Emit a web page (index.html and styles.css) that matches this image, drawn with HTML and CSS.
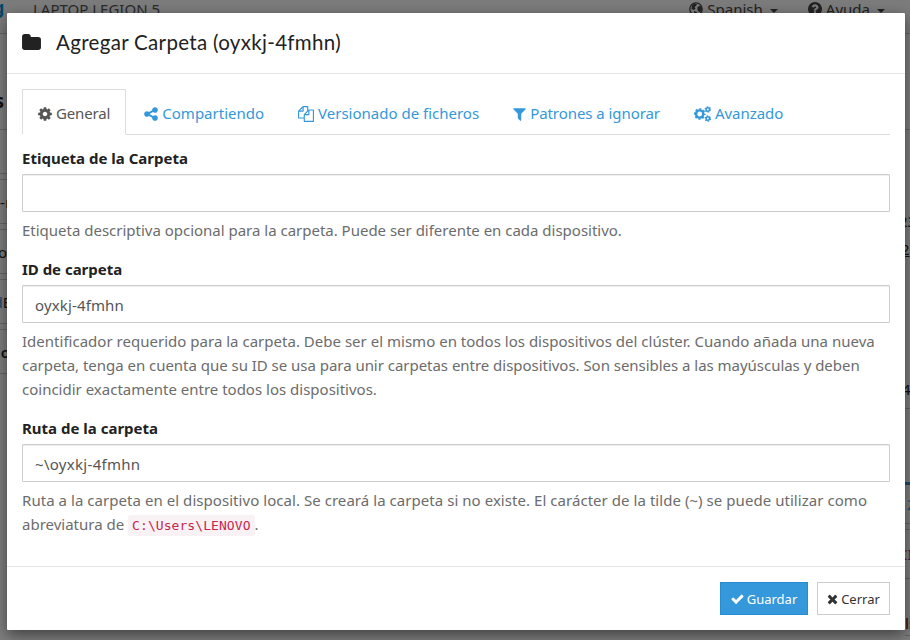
FILE: index.html
```html
<!DOCTYPE html>
<html lang="es">
<head>
<meta charset="utf-8">
<title>Agregar Carpeta</title>
<link rel="stylesheet" href="styles.css">
</head>
<body>
<svg class="defs" aria-hidden="true">
  <symbol id="cog" viewBox="128 0 1536 1792"><path d="M1152 896q0-106-75-181t-181-75-181 75-75 181 75 181 181 75 181-75 75-181zm512-109v222q0 12-8 23t-20 13l-185 28q-19 54-39 91 35 50 107 138 10 12 10 25t-9 23q-27 37-99 108t-94 71q-12 0-26-9l-138-108q-44 23-91 38-16 136-29 186-7 28-36 28h-222q-14 0-24.500-8.500t-11.500-21.500l-28-184q-49-16-90-37l-141 107q-10 9-25 9-14 0-25-11-126-114-165-168-7-10-7-23 0-12 8-23 15-21 51-66.500t54-70.500q-27-50-41-99l-183-27q-13-2-21-12.500t-8-23.500v-222q0-12 8-23t19-13l186-28q14-46 39-92-40-57-107-138-10-12-10-24 0-10 9-23 26-36 98.500-107.500t94.500-71.500q13 0 26 10l138 107q44-23 91-38 16-136 29-186 7-28 36-28h222q14 0 24.500 8.500t11.500 21.500l28 184q49 16 90 37l142-107q9-9 24-9 13 0 25 10 129 119 165 170 7 8 7 22 0 12-8 23-15 21-51 66.500t-54 70.500q26 50 41 98l183 28q13 2 21 12.500t8 23.500z"/></symbol>
</svg>

<div class="page">
  <header class="navbar">
    <span class="brand">g</span>
    <span class="device">LAPTOP LEGION 5</span>
    <span class="nav-item">
      <svg class="nav-icon" viewBox="0 0 14 14"><circle cx="7" cy="7" r="6.200" fill="none" stroke="currentColor" stroke-width="1.300"/><path d="M3 3l3-1.500 2 1-1 1.500-1.500 1 1 1.500-1.500 1.500-2.500-1zM8.500 5l3-1.500 1.500 3-1 3-2 .5-1.500-2zM5 9l3 1-1 3-2-1z"/></svg>
      <span>Spanish</span><i class="caret"></i></span>
    <span class="nav-item help-item">
      <svg class="nav-icon" viewBox="128 128 1536 1536"><path d="M1024 1376v-192q0-14-9-23t-23-9h-192q-14 0-23 9t-9 23v192q0 14 9 23t23 9h192q14 0 23-9t9-23zm256-672q0-88-55.500-163t-138.500-116-170-41q-243 0-371 213-15 24 8 42l132 100q7 6 19 6 16 0 25-12 53-68 86-92 34-24 86-24 48 0 85.500 26t37.500 59q0 38-20 61t-68 45q-63 28-115.500 86.500t-52.500 125.500v36q0 14 9 23t23 9h192q14 0 23-9t9-23q0-19 21.500-49.500t54.500-49.500q32-18 49-28.500t46-35 44.500-48 28-60.500 12.500-81zm384 192q0 209-103 385.500t-279.500 279.500-385.500 103-385.500-103-279.500-279.500-103-385.500 103-385.500 279.500-279.500 385.500-103 385.500 103 279.500 279.500 103 385.500z"/></svg>
      <span>Ayuda</span><i class="caret"></i></span>
  </header>
  <div class="behind">
    <div class="side left">
      <div class="row heading"><b>s</b></div>
      <div class="row spacer"></div>
      <div class="row panel cut-r"><span>-r</span></div>
      <div class="row panel"><span>o</span></div>
      <div class="row panel cut-e"><span><em>d</em>E</span></div>
      <div class="row panel cut-o"><b>do</b></div>
    </div>
    <div class="side right">
      <div class="row top"></div>
      <div class="row r1"><span>23</span></div>
      <div class="row r2"><u>2</u></div>
      <div class="row r3"><span>4</span></div>
      <div class="row r4"></div>
      <div class="row r5"><em>2</em></div>
      <div class="row r6"><strong>CI</strong></div>
      <div class="row r7"><span>li</span></div>
    </div>
  </div>
</div>
<div class="backdrop"></div>

<div class="modal">
  <div class="modal-header">
    <svg class="folder" viewBox="64 128 1664 1408"><path d="M1728 608v704q0 92-66 158t-158 66h-1216q-92 0-158-66t-66-158v-960q0-92 66-158t158-66h320q92 0 158 66t66 158v32h672q92 0 158 66t66 158z"/></svg>
    <h4>Agregar Carpeta (oyxkj-4fmhn)</h4>
  </div>
  <div class="modal-body">
    <nav class="tabs">
      <a class="tab active"><svg class="i-cog"><use href="#cog"/></svg><span class="t1">General</span></a>
      <a class="tab"><svg class="i-cog" viewBox="128 0 1536 1792"><path d="M1344 1024q133 0 226.500 93.500t93.500 226.500-93.500 226.500-226.500 93.500-226.500-93.500-93.500-226.500q0-12 2-34l-360-180q-92 86-218 86-133 0-226.500-93.500t-93.500-226.500 93.500-226.500 226.500-93.500q126 0 218 86l360-180q-2-22-2-34 0-133 93.500-226.500t226.500-93.500 226.500 93.500 93.500 226.500-93.500 226.500-226.500 93.500q-126 0-218-86l-360 180q2 22 2 34t-2 34l360 180q92-86 218-86z"/></svg><span class="t2">Compartiendo</span></a>
      <a class="tab"><svg class="i-files" viewBox="0 0 1792 1792"><path d="M1696 384q40 0 68 28t28 68v1216q0 40-28 68t-68 28h-960q-40 0-68-28t-28-68v-288h-544q-40 0-68-28t-28-68v-672q0-40 20-88t48-76l408-408q28-28 76-48t88-20h416q40 0 68 28t28 68v328q68-40 128-40h416zm-544 213l-299 299h299v-299zm-640-384l-299 299h299v-299zm196 647l316-316v-416h-384v416q0 40-28 68t-68 28h-416v640h512v-256q0-40 20-88t48-76zm956 804v-1152h-384v416q0 40-28 68t-68 28h-416v640h896z"/></svg><span class="t3">Versionado de ficheros</span></a>
      <a class="tab"><svg class="i-filter" viewBox="192 0 1408 1792"><path d="M1595 295q17 41-14 70l-493 493v742q0 42-39 59-13 5-25 5-27 0-45-19l-256-256q-19-19-19-45v-486l-493-493q-31-29-14-70 17-39 59-39h1280q42 0 59 39z"/></svg><span class="t4">Patrones a ignorar</span></a>
      <a class="tab"><svg class="i-cogs" viewBox="0 0 17 16"><g fill="none" stroke="currentColor"><circle cx="5.700" cy="8" r="3.600" stroke-width="2.400"/><circle cx="5.700" cy="8" r="5" stroke-width="1.700" stroke-dasharray="2.100 1.827" stroke-dashoffset="1.050"/><circle cx="13.800" cy="3.400" r="1.750" stroke-width="1.500"/><circle cx="13.800" cy="3.400" r="2.700" stroke-width="1.100" stroke-dasharray="1.500 1.327"/><circle cx="13.800" cy="12.600" r="1.750" stroke-width="1.500"/><circle cx="13.800" cy="12.600" r="2.700" stroke-width="1.100" stroke-dasharray="1.500 1.327"/></g></svg><span class="t5">Avanzado</span></a>
    </nav>

    <div class="group">
      <label class="l1">Etiqueta de la Carpeta</label>
      <div class="input"></div>
      <p><span class="p1">Etiqueta descriptiva opcional para la carpeta. Puede ser diferente en cada dispositivo.</span></p>
    </div>
    <div class="group">
      <label class="l2">ID de carpeta</label>
      <div class="input"><span>oyxkj-4fmhn</span></div>
      <p><span class="p2">Identificador requerido para la carpeta. Debe ser el mismo en todos los dispositivos del clúster. Cuando añada una nueva</span><br><span class="p3">carpeta, tenga en cuenta que su ID se usa para unir carpetas entre dispositivos. Son sensibles a las mayúsculas y deben</span><br><span class="p4">coincidir exactamente entre todos los dispositivos.</span></p>
    </div>
    <div class="group">
      <label class="l3">Ruta de la carpeta</label>
      <div class="input"><span class="path">~\oyxkj-4fmhn</span></div>
      <p><span class="p5">Ruta a la carpeta en el dispositivo local. Se creará la carpeta si no existe. El carácter de la tilde (~) se puede utilizar como</span><br><span class="p6">abreviatura de</span> <code>C:\Users\LENOVO</code>.</p>
    </div>
  </div>
  <div class="modal-footer">
    <button class="btn primary"><svg viewBox="100 0 1600 1792"><path d="M1671 566q0 40-28 68l-724 724-136 136q-28 28-68 28t-68-28l-136-136-362-362q-28-28-28-68t28-68l136-136q28-28 68-28t68 28l294 295 656-657q28-28 68-28t68 28l136 136q28 28 28 68z"/></svg><span>Guardar</span></button>
    <button class="btn"><svg class="times" viewBox="280 0 1232 1792"><path d="M1490 1322q0 40-28 68l-136 136q-28 28-68 28t-68-28l-294-294-294 294q-28 28-68 28t-68-28l-136-136q-28-28-28-68t28-68l294-294-294-294q-28-28-28-68t28-68l136-136q28-28 68-28t68 28l294 294 294-294q28-28 68-28t68 28l136 136q28 28 28 68t-28 68l-294 294 294 294q28 28 28 68z"/></svg><span>Cerrar</span></button>
  </div>
</div>
</body>
</html>
```
FILE: styles.css
```css
* { box-sizing: border-box; }
body { margin: 0; width: 910px; height: 640px; overflow: hidden; background: #fff;
  font: 15px/24px "Noto Sans", "Open Sans", sans-serif; color: #222; }
svg { fill: currentColor; flex: none; }
.defs { position: absolute; width: 0; height: 0; }

.page { position: absolute; inset: 0; display: flex; flex-direction: column; overflow: hidden; }
.navbar { height: 34px; display: flex; align-items: flex-start; background: #f8f8f8;
  border-bottom: 1px solid #ccc; color: #555; line-height: 18px; padding-right: 25px; }
.brand { width: 33px; margin-left: -7px; margin-right: 7px; font-size: 18px; font-weight: 700; color: #0891d1; line-height: 14px; }
.device { flex: 1; letter-spacing: 0; }
.nav-item { display: flex; align-items: center; height: 18px; gap: 4px; color: #444; }
.help-item { margin-left: 30px; }
.nav-icon { width: 14px; height: 14px; }
.caret { border: 4px solid transparent; border-top-color: currentColor; border-bottom: 0; margin: 3px 0 0 3px; }
.behind { flex: 1; display: flex; justify-content: space-between; }
.side { width: 7px; overflow: hidden; white-space: nowrap; }
.right { width: 5px; }
.row { display: flex; align-items: center; border-bottom: 1px solid #ccc; }
.left .row { justify-content: flex-end; }
.left .cut-r { justify-content: flex-start; }
.cut-r span { letter-spacing: .5px; }
.cut-e span { margin-right: -4px; }
.left .cut-o b { margin-right: -3px; font-weight: 600; }
.row em { color: #3498db; font-style: normal; }
.heading { height: 96px; padding: 38px 3px 0 0; font-size: 19px; }
.spacer { height: 44px; }
.panel { height: 45px; margin-top: 5px; border-top: 1px solid #ccc; }
.top { height: 96px; }
.r1 { height: 106px; border: 0; padding-top: 76px; }
.r1 span { margin-left: -6px; }
.r2 { height: 26px; border: 0; }
.r2 u { margin-left: -4px; }
.r3 { height: 147px; padding-top: 107px; }
.r3 span { margin-left: -3px; }
.r4 { height: 76px; border-bottom: 3px solid #3498db; }
.r5 { height: 39px; padding-left: 2px; }
.r6 { height: 50px; margin-top: 5px; border-top: 1px solid #ccc; }
.r6 strong { color: #a32b7d; font-weight: 400; margin-left: -7px; }
.r7 { height: 57px; padding-top: 32px; }
.backdrop { position: absolute; inset: 0; background: rgba(0,0,0,.5); }

.modal { position: absolute; left: 7px; top: 13px; width: 898px; height: 617px;
  display: flex; flex-direction: column; background: #fff; border-radius: 1px; box-shadow: 0 5px 15px rgba(0,0,0,.5); }
.modal-header { height: 61px; border-bottom: 1px solid #e5e5e5; padding: 0 15px; display: flex; align-items: center; }
.folder { width: 19px; height: 16px; margin: -2px 15px 0 0; }
h4 { margin: -3px 0 0; font: 400 20.500px/24px Lato, sans-serif; letter-spacing: .32px; white-space: nowrap; }
.modal-body { flex: 1; padding: 15px; }
.tabs { display: flex; height: 46px; border-bottom: 1px solid #ddd; margin-bottom: 11px; }
.tab { display: flex; align-items: center; gap: 4px; height: 46px; padding: 3px 15px 0; margin-right: 2px;
  border: 1px solid transparent; color: #3498db; white-space: nowrap; }
.tab span { margin-top: -2px; }
.t1 { letter-spacing: -.14px; }
.t4 { letter-spacing: -.06px; }
.t5 { letter-spacing: -.05px; }
.tab.active { background: #fff; border-color: #ddd #ddd #fff; border-radius: 1px 1px 0 0; color: #555; }
.i-cog { width: 14px; height: 16px; }
.i-files { width: 16px; height: 16px; }
.i-filter { width: 13px; height: 16px; }
.i-cogs { width: 17px; height: 16px; }
.group { margin-bottom: 15px; }
label { display: block; width: max-content; font-weight: 700; height: 24px; margin-bottom: 4px; font-size: 15px; }
.l2 { letter-spacing: -.02px; }
.input { height: 38px; border: 1px solid #ccc; border-radius: 1px; padding: 7px 12px; color: #555;
  box-shadow: inset 0 1px 1px rgba(0,0,0,.075); line-height: 24px; }
.input span { letter-spacing: .14px; }
.input .path { letter-spacing: .3px; }
p { margin: 6px 0 0; color: #6c6c6c; white-space: nowrap; }
.p1 { letter-spacing: -.01px; }
.p2 { letter-spacing: .015px; }
.p3 { letter-spacing: -.03px; }
.p5 { letter-spacing: .05px; }
code { font: 13px/18px "DejaVu Sans Mono", monospace; letter-spacing: .07px; color: #c7254e; background: #f9f2f4; padding: 3px 4px; border-radius: 2px; }
.modal-footer { height: 64px; border-top: 1px solid #e5e5e5; padding: 15px; display: flex; justify-content: flex-end; gap: 9px; }
.btn { height: 33px; width: 73px; border: 1px solid #ccc; border-radius: 0; background: #fff; color: #333; padding: 0;
  display: flex; align-items: center; justify-content: center; gap: 3px; font: 13px/20px "Noto Sans", sans-serif; }
.btn svg { width: 13px; height: 14px; }
.btn .times { width: 11px; }
.btn.primary { width: 88px; background: #3498db; border-color: #258cd1; color: #fff; }
```
